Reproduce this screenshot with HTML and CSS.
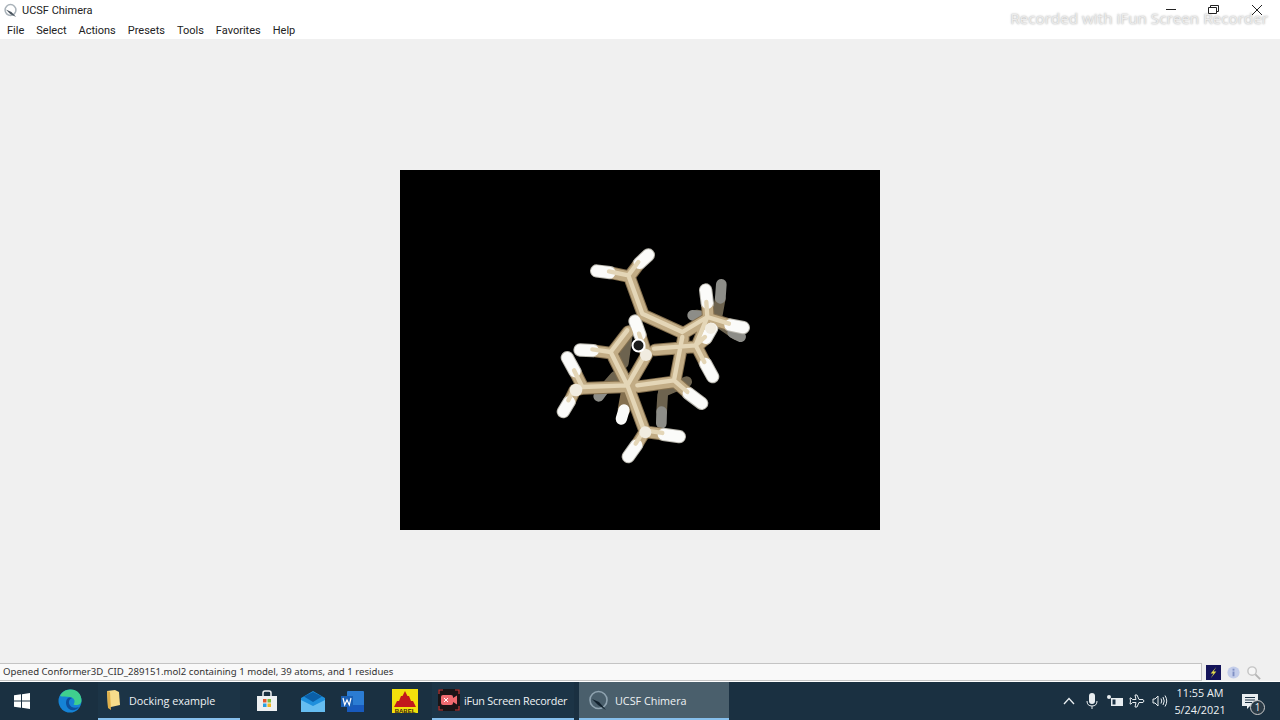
FILE: index.html
```html
<!DOCTYPE html>
<html lang="en">

<head>
    <meta charset="UTF-8">
    <title>UCSF Chimera</title>
    <link rel="stylesheet" href="styles.css">
</head>

<body>
    <div class="window">
        <!-- title bar -->
        <div class="title-bar">
            <svg class="title-icon" viewBox="0 0 16 16">
                <circle cx="8" cy="7.500" r="5.800" fill="none" stroke="#a9b2b9" stroke-width="1.600" />
                <path d="M3 7 L9 9.500 L14 15 L8 12 Z" fill="#4a545e" />
            </svg>
            <span class="title-text">UCSF Chimera</span>
            <div class="recorded">Recorded with iFun Screen Recorder</div>
            <div class="window-buttons">
                <svg class="win-btn" viewBox="0 0 43 20">
                    <path d="M18 9.500 H28" stroke="#222" fill="none" />
                </svg>
                <svg class="win-btn" viewBox="0 0 43 20">
                    <path d="M17.500 7.500 H25.500 V13.500 H17.500 Z M19.500 7.500 V5.500 H27.500 V11.500 H25.500" stroke="#222" fill="none" />
                </svg>
                <svg class="win-btn" viewBox="0 0 43 20">
                    <path d="M18 5 L28 15 M28 5 L18 15" stroke="#222" fill="none" />
                </svg>
            </div>
        </div>

        <!-- menu -->
        <div class="menu-bar">
            <span class="menu-item">File</span>
            <span class="menu-item">Select</span>
            <span class="menu-item">Actions</span>
            <span class="menu-item">Presets</span>
            <span class="menu-item">Tools</span>
            <span class="menu-item">Favorites</span>
            <span class="menu-item">Help</span>
        </div>

        <!-- graphics window -->
        <div class="main-area">
            <svg class="viewer" viewBox="0 0 480 360">
                <defs>
                    <filter id="soft" x="-10%" y="-10%" width="120%" height="120%">
                        <feGaussianBlur stdDeviation="1.500" />
                    </filter>
                    <path id="backBonds" d="M368 480 L365 530 M225 425 L190 465 M262 300 L250 385 M470 240 L500 245 M530 250 L541 190 M540 265 L590 300 M370 470 L440 440" />
                    <path id="backH" d="M365 530 L364 565 M190 465 L176 484 M458 241 L480 243 M541 190 L544 148 M578 293 L602 305" />
                    <path id="midBonds" d="M262 470 L252 525" />
                    <path id="midH" d="M252 525 L244 552" />
                    <path id="bonds" d="M268 125 L298 85 M268 125 L210 113 M268 125 L310 240 L430 295 L505 250 M505 250 L502 205 M505 250 L570 270 M505 250 L470 335 L345 345 M470 335 L498 310 M470 335 L496 385 M430 310 L405 440 L295 455 M405 440 L445 475 M265 455 L130 460 L105 410 M130 460 L105 465 L88 500 M265 455 L315 590 L370 598 M315 590 L290 630 M265 455 L320 360 L300 300 M215 355 L265 455 M215 355 L160 347 M215 355 L265 290" />
                    <path id="hydrogens" d="M325 60 L298 85 M170 108 L210 113 M502 205 L497 165 M570 270 L610 278 M498 310 L515 280 M496 385 L518 425 M445 475 L485 505 M105 410 L82 368 M88 500 L70 530 M370 598 L418 605 M290 630 L265 665 M300 300 L285 258 M160 347 L120 345" />
                </defs>
                <g class="molecule" filter="url(#soft)" transform="translate(140 65) scale(0.3333)">
                    <use href="#backBonds" class="back-bond" />
                    <use href="#backH" class="back-h" />
                    <use href="#midBonds" class="bond-edge" />
                    <use href="#midH" class="h-mid" />
                    <use href="#bonds" class="bond-edge" />
                    <use href="#hydrogens" class="h-edge" />
                    <use href="#bonds" class="bond-mid" />
                    <use href="#hydrogens" class="h-mid" />
                    <use href="#bonds" class="bond-light" x="-3" y="-4" />
                    <circle class="joint" cx="318" cy="360" r="18" />
                    <circle class="joint" cx="108" cy="465" r="19" />
                    <circle class="joint" cx="316" cy="592" r="18" />
                    <circle class="joint" cx="512" cy="280" r="17" />
                </g>
                <circle class="cursor-ring" cx="238.500" cy="175.500" r="6" />
            </svg>
        </div>

        <!-- status line -->
        <div class="status-bar">
            <div class="status-text">Opened Conformer3D_CID_289151.mol2 containing 1 model, 39 atoms, and 1 residues</div>
            <div class="status-icons">
                <svg class="status-icon" viewBox="0 0 16 16">
                    <rect width="16" height="16" fill="#14145a" />
                    <path d="M11 2 L5 9 H8 L5 14 L11 7 H8 Z" fill="#e6e04a" />
                </svg>
                <svg class="status-icon" viewBox="0 0 16 16">
                    <circle cx="8" cy="8" r="6.500" fill="#c3cdea" />
                    <rect x="7" y="7" width="2" height="5" fill="#7f8fc4" />
                    <rect x="7" y="4" width="2" height="2" fill="#7f8fc4" />
                </svg>
                <svg class="status-icon" viewBox="0 0 16 16">
                    <circle cx="6.500" cy="6.500" r="4.500" fill="#f6f6f6" stroke="#c4c4c4" stroke-width="1.500" />
                    <path d="M10 10 L15 15" stroke="#b4b4b4" stroke-width="2" />
                </svg>
            </div>
        </div>
    </div>

    <!-- windows taskbar -->
    <div class="taskbar">
        <div class="task-icon start">
            <svg width="16" height="16" viewBox="0 0 16 16">
                <path d="M0 2.300 L7 1.300 V7.500 H0 Z M8 1.200 L16 0 V7.500 H8 Z M0 8.500 H7 V14.700 L0 13.700 Z M8 8.500 H16 V16 L8 14.800 Z" fill="#fff" />
            </svg>
        </div>
        <div class="task-icon edge">
            <svg width="24" height="24" viewBox="0 0 24 24">
                <circle cx="12" cy="12" r="11.500" fill="#1583d6" />
                <path d="M2 7 C5 1 10 .5 13 .5 C20 .5 23.500 6 23.500 11.500 C23.500 15.500 19 17 15.500 15.500 C18 12 16 8.500 12 8 C8 7.500 4 8 2 7 Z" fill="#3fcf8e" />
                <path d="M11 8.500 C7 10 7 17 11 20 C15 22.500 19 20.500 21 18 C17 19.500 12 18.500 11 14.500 C10.500 12 11.500 10 14 9 C13 8.500 12 8.300 11 8.500 Z" fill="#0d4f9c" />
            </svg>
        </div>
        <div class="task-item folder-item">
            <svg width="13" height="20" viewBox="0 0 13 20">
                <path d="M0 1 L8 0 L12 2 L13 15 L4 17 L1 17 Z" fill="#f7dc8b" />
                <path d="M0 1 L3 2 L4 20 L1 18 Z" fill="#e0b04a" />
            </svg>
            <span>Docking example</span>
        </div>
        <div class="task-icon store">
            <svg width="22" height="22" viewBox="0 0 22 22">
                <path d="M1 6 H21 V21 H1 Z" fill="#eef0f2" />
                <path d="M7 6 V3 Q7 1 9 1 H13 Q15 1 15 3 V6" fill="none" stroke="#eef0f2" stroke-width="1.500" />
                <rect x="7" y="9" width="3.500" height="3.500" fill="#e4572e" />
                <rect x="11.500" y="9" width="3.500" height="3.500" fill="#7db93d" />
                <rect x="7" y="13.500" width="3.500" height="3.500" fill="#2b9fe0" />
                <rect x="11.500" y="13.500" width="3.500" height="3.500" fill="#f3b61f" />
            </svg>
        </div>
        <div class="task-icon mail">
            <svg width="24" height="21" viewBox="0 0 24 21">
                <path d="M0 7 L12 0 L24 7 V21 H0 Z" fill="#1f8fdc" />
                <path d="M3 5.500 L12 1 L21 5.500 L12 11 Z" fill="#0b5fa8" />
                <path d="M0 9 L12 15 L24 9 V21 H0 Z" fill="#66bdf0" />
            </svg>
        </div>
        <div class="task-icon word">
            <svg width="24" height="21" viewBox="0 0 24 21">
                <rect x="6" y="0" width="17" height="21" rx="1" fill="#2b7cd3" />
                <rect x="6" y="14" width="17" height="7" fill="#185abd" />
                <rect x="0" y="5" width="12" height="11" fill="#1a5fb4" />
                <path d="M2 7 L3.700 14 L6 9 L8.300 14 L10 7" fill="none" stroke="#fff" stroke-width="1.200" />
            </svg>
        </div>
        <div class="task-icon babel">
            <svg width="26" height="24" viewBox="0 0 26 24">
                <rect width="26" height="24" fill="#f2e10c" />
                <path d="M13 2 L15.500 7 H17 L19 12 H21 L24 18 H2 L5 12 H7 L9 7 H10.500 Z" fill="#c2181c" />
                <text x="13" y="23.500" class="babel-text">BABEL</text>
            </svg>
        </div>
        <div class="task-item ifun-item">
            <svg width="22" height="22" viewBox="0 0 22 22">
                <rect width="22" height="22" rx="2" fill="#1a1416" />
                <path d="M1 5 V1 H5 M17 1 H21 V5 M1 17 V21 H5 M21 17 V21 H17" fill="none" stroke="#c23a3a" stroke-width="1.200" />
                <rect x="3" y="6" width="12" height="10" rx="2" fill="#ef6a6f" />
                <path d="M15 9 L19 6.500 V15.500 L15 13 Z" fill="#ef6a6f" />
                <path d="M6 9 L10 13 M10 9 L6 13" stroke="#fff" />
            </svg>
            <span class="ifun-label">iFun Screen Recorder</span>
        </div>
        <div class="task-item chimera-item">
            <svg width="21" height="21" viewBox="0 0 21 21">
                <circle cx="10.500" cy="10" r="8.500" fill="none" stroke="#8fa3b0" stroke-width="1.600" />
                <path d="M4 9 L11 12 L18 20 L10 15 Z" fill="#10202c" />
            </svg>
            <span>UCSF Chimera</span>
        </div>
        <div class="tray">
            <span class="tray-slot">
                <svg width="12" height="8" viewBox="0 0 12 8">
                    <path d="M1 7 L6 1.500 L11 7" fill="none" stroke="#e8edf0" stroke-width="1.300" />
                </svg>
            </span>
            <span class="tray-slot">
                <svg width="12" height="16" viewBox="0 0 12 16">
                    <rect x="3" y="0" width="6" height="11" rx="3" fill="#e8edf0" />
                    <path d="M1 8 Q1 13 6 13 Q11 13 11 8 M6 13 V16" fill="none" stroke="#e8edf0" />
                </svg>
            </span>
            <span class="tray-slot">
                <svg width="16" height="12" viewBox="0 0 16 12">
                    <rect x="4" y="3" width="12" height="8" fill="#e8edf0" />
                    <rect x="5.500" y="4.500" width="3" height="5" fill="#1c3244" />
                    <circle cx="2" cy="2" r="2" fill="#e8edf0" />
                </svg>
            </span>
            <span class="tray-slot">
                <svg width="16" height="14" viewBox="0 0 16 14">
                    <path d="M6 1 H8 L10 5.500 H14 Q16 7 14 8.500 H10 L8 13 H6 L7 8.500 H3.500 L2 10 H1 L1.500 7 L1 4 H2 L3.500 5.500 H7 Z" fill="none" stroke="#e8edf0" />
                </svg>
            </span>
            <span class="tray-slot">
                <svg width="16" height="14" viewBox="0 0 16 14">
                    <path d="M1 5 H3 L6 2 V12 L3 9 H1 Z M9 4.500 Q10.500 7 9 9.500 M11 3 Q13.500 7 11 11 M13 1.500 Q16.500 7 13 12.500" fill="none" stroke="#e8edf0" />
                </svg>
            </span>
            <div class="clock">
                <div>11:55 AM</div>
                <div>5/24/2021</div>
            </div>
            <div class="notify">
                <svg width="16" height="15" viewBox="0 0 16 15">
                    <path d="M0 0 H16 V12 H8 L5 15 V12 H0 Z" fill="#e8edf0" />
                    <path d="M3 3.500 H13 M3 6 H13 M3 8.500 H10" stroke="#1c3244" />
                </svg>
                <span class="notify-count">1</span>
            </div>
        </div>
    </div>
</body>

</html>
```

FILE: styles.css
```css
/* page */
html,
body {
    margin: 0;
    height: 100%;
    overflow: hidden;
}

body {
    display: flex;
    flex-direction: column;
    font-family: "Open Sans", "Noto Sans", sans-serif;
    background-color: #f0f0f0;
}

.window {
    flex: 1;
    display: flex;
    flex-direction: column;
    min-height: 0;
}

/* title bar */
.title-bar {
    position: relative;
    height: 20px;
    display: flex;
    align-items: center;
    padding-left: 3px;
    background-color: #fff;
    font-family: Roboto, sans-serif;
    font-size: 11px;
    color: #222;
}

.title-text {
    padding-top: 1px;
}

.title-icon {
    width: 15px;
    height: 15px;
    margin-right: 4px;
}

.recorded {
    position: absolute;
    right: 12px;
    top: 7px;
    font-family: "Open Sans", sans-serif;
    font-size: 15.250px;
    line-height: 22px;
    white-space: nowrap;
    color: #ececec;
    text-shadow: 0 0 2px #999;
}

.window-buttons {
    position: absolute;
    right: 3px;
    top: 0;
    display: flex;
}

.win-btn {
    width: 43px;
    height: 20px;
}

/* menu */
.menu-bar {
    height: 19px;
    box-sizing: border-box;
    display: flex;
    align-items: center;
    padding-left: 7px;
    padding-top: 2px;
    gap: 12px;
    background-color: #fff;
    font-family: Roboto, sans-serif;
    font-size: 11px;
    color: #222;
}

/* main area with the black viewer */
.main-area {
    flex: 1;
    display: flex;
    justify-content: center;
    align-items: center;
    min-height: 0;
    padding-bottom: 2px;
    background-color: #f0f0f0;
}

.viewer {
    display: block;
    width: 480px;
    height: 360px;
    background-color: #000;
}

.molecule {
    fill: none;
    stroke-linecap: round;
    stroke-linejoin: round;
}

.back-bond {
    stroke: #6d6450;
    stroke-width: 32;
}

.back-h {
    stroke: #8d8d88;
    stroke-width: 32;
}

.bond-edge {
    stroke: #85704f;
    stroke-width: 38;
}

.h-edge {
    stroke: #b9b7ae;
    stroke-width: 40;
}

.bond-mid {
    stroke: #c2ac85;
    stroke-width: 32;
}

.h-mid {
    stroke: #fbfbf9;
    stroke-width: 34;
}

.bond-light {
    stroke: #e4d6b7;
    stroke-width: 13;
}

.joint {
    fill: #f1ece0;
    stroke: none;
}

.cursor-ring {
    fill: #1c1c1c;
    stroke: #fff;
    stroke-width: 2;
}

/* status line */
.status-bar {
    height: 19px;
    display: flex;
    align-items: center;
    box-sizing: border-box;
    border-bottom: 1px solid #fff;
    background-color: #f0f0f0;
}

.status-text {
    width: 1202px;
    height: 18px;
    padding-left: 3px;
    box-sizing: border-box;
    border: 1px solid #c4c4c4;
    border-left: none;
    background-color: #f9f9f9;
    font-family: "Noto Sans", sans-serif;
    font-size: 9.600px;
    line-height: 16px;
    color: #333;
    white-space: nowrap;
}

.status-icons {
    display: flex;
    gap: 5px;
    padding-left: 4px;
}

.status-icon {
    width: 15px;
    height: 15px;
}

/* taskbar */
.taskbar {
    height: 38px;
    display: flex;
    align-items: stretch;
    background-color: #1a3041;
    color: #eef2f4;
    font-size: 10.800px;
}

.task-icon {
    display: flex;
    align-items: center;
    justify-content: center;
}

.start {
    width: 44px;
}

.edge {
    width: 52px;
    padding-right: 2px;
}

.store {
    width: 44px;
    margin-left: 5px;
}

.mail {
    width: 48px;
}

.word {
    width: 32px;
}

.babel {
    width: 54px;
    padding-left: 9px;
}

.babel-text {
    font-family: "Liberation Sans", sans-serif;
    font-size: 6px;
    font-weight: bold;
    fill: #3a1a10;
    text-anchor: middle;
}

.task-item {
    display: flex;
    align-items: center;
    box-sizing: border-box;
    border-bottom: 2px solid #86bfec;
}

.folder-item {
    width: 142px;
    padding-left: 9px;
    gap: 9px;
    background-color: #1c3446;
}

.ifun-item {
    width: 142px;
    padding-left: 6px;
    gap: 4px;
    background-color: #1c3446;
}

.ifun-label {
    letter-spacing: -0.200px;
}

.chimera-item {
    width: 150px;
    margin-left: 5px;
    padding-left: 9px;
    gap: 6px;
    background-color: #4a5f6c;
}

.tray {
    margin-left: auto;
    padding-right: 9px;
    display: flex;
    align-items: center;
}

.tray-slot {
    width: 22.600px;
    display: flex;
    justify-content: center;
}

.clock {
    width: 58px;
    text-align: center;
    line-height: 17px;
}

.notify {
    position: relative;
    width: 42px;
    display: flex;
    justify-content: center;
    align-items: center;
}

.notify-count {
    position: absolute;
    left: 21px;
    top: 6px;
    width: 13px;
    height: 13px;
    border: 1px solid #ccc;
    border-radius: 50%;
    background-color: #2a3a46;
    text-align: center;
    font-size: 10px;
    line-height: 13px;
}
```
